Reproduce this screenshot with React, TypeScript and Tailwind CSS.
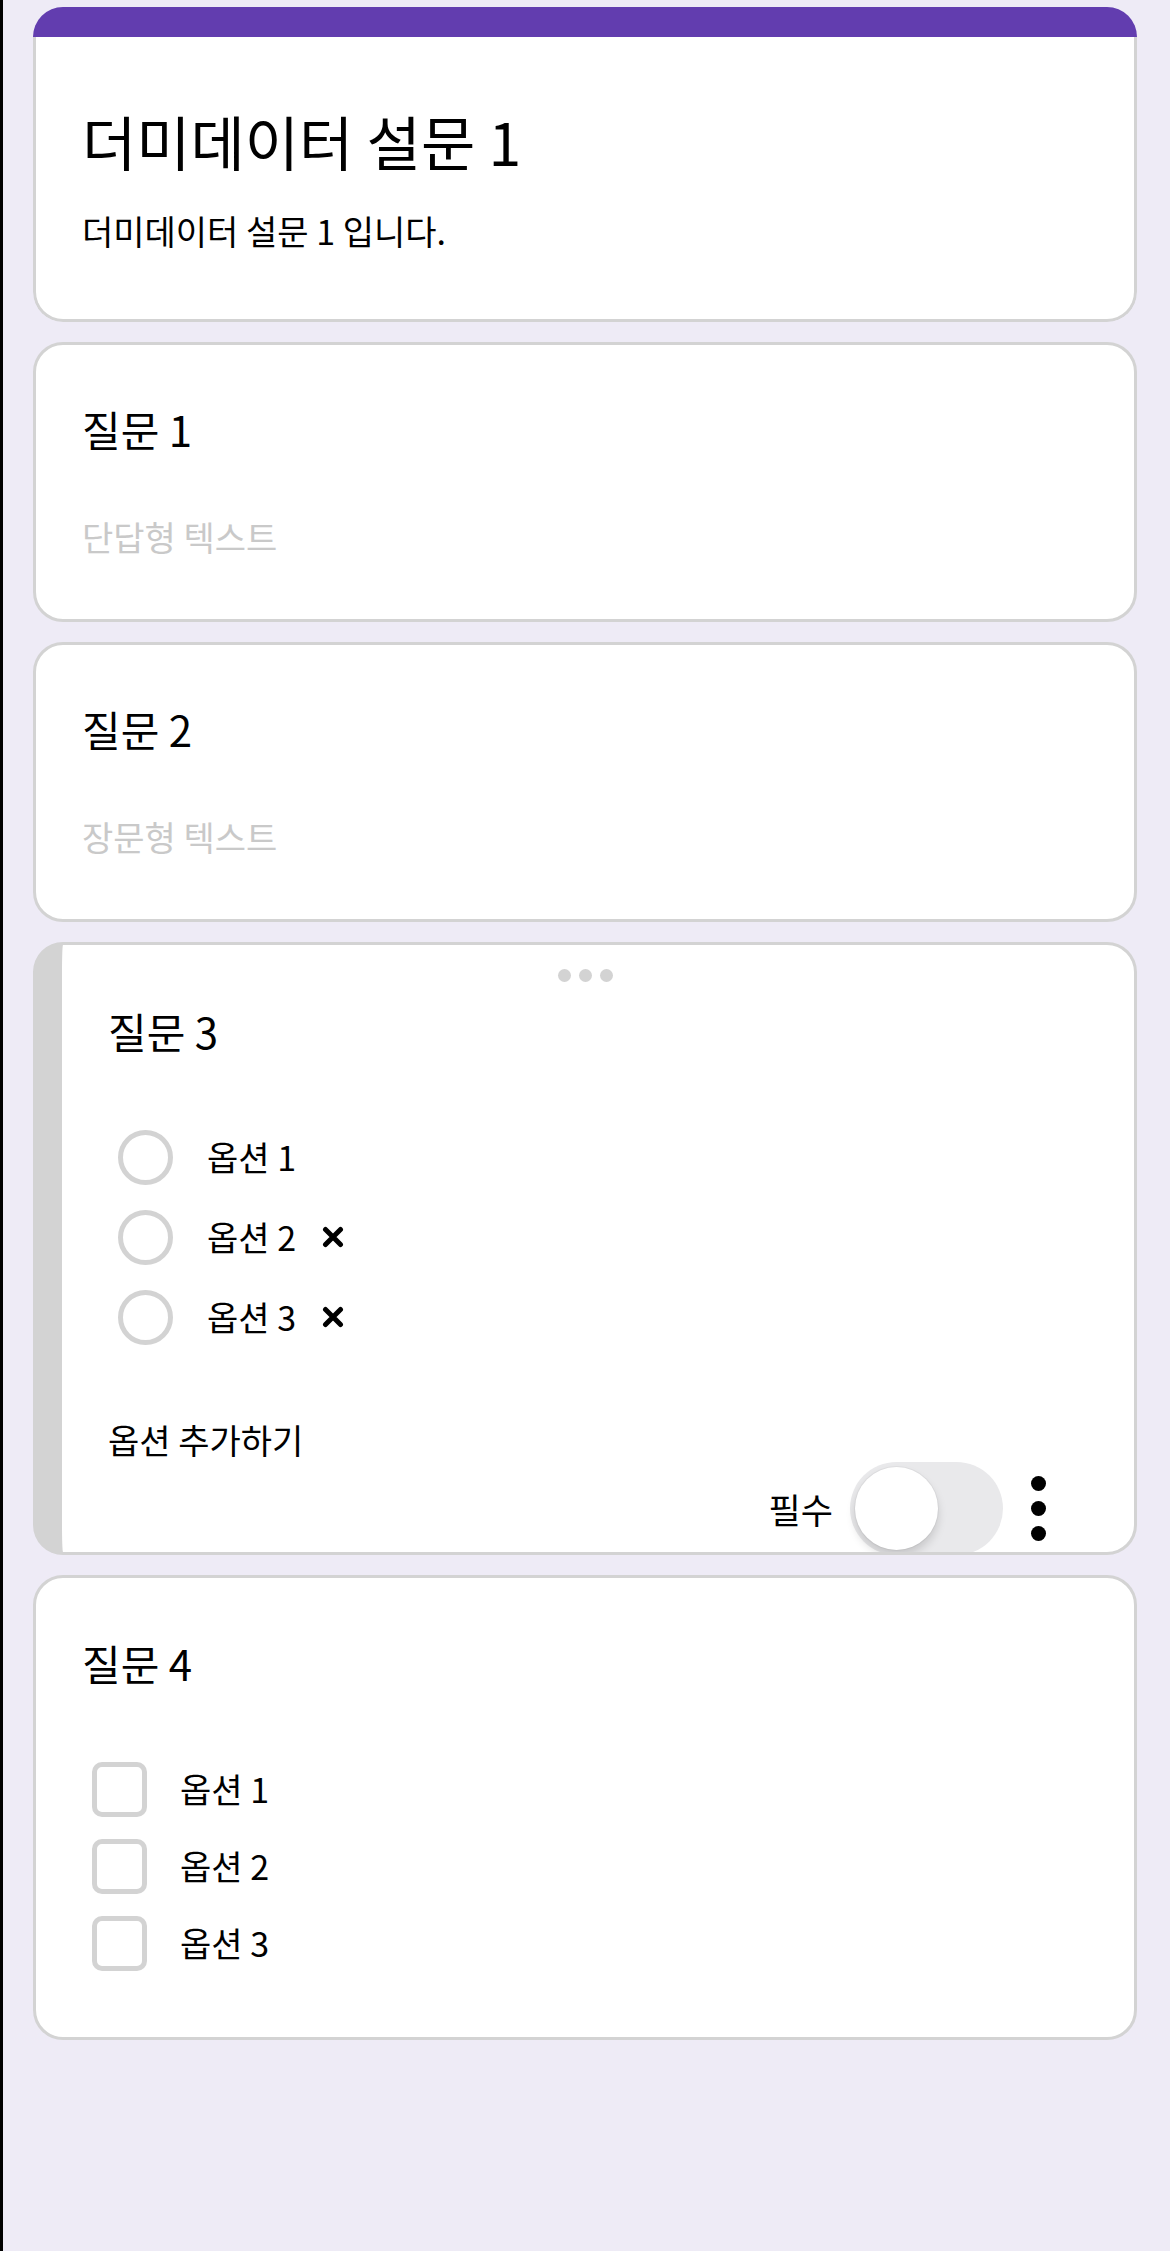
import { ReactNode } from "react"

const grayBorder = "border-[#d3d3d3]"

function Card({ children, className = "" }: { children: ReactNode; className?: string }) {
  return (
    <div className={`rounded-[30px] border-[3px] ${grayBorder} bg-white ${className}`}>{children}</div>
  )
}

function CloseIcon() {
  return (
    <svg width="22" height="22" viewBox="0 0 22 22" className="ml-[26px]">
      <path d="M3.5 3.5 L18.5 18.5 M18.5 3.5 L3.5 18.5" stroke="black" strokeWidth="5" strokeLinecap="round" />
    </svg>
  )
}

function RadioRow({ label, removable }: { label: string; removable?: boolean }) {
  return (
    <li className="flex h-[56px] items-center">
      <span className="h-[55px] w-[55px] rounded-full border-[5px] border-[#d3d3d3]" />
      <span className="ml-[34px] text-[34px] leading-[40px]">{label}</span>
      {removable && <CloseIcon />}
    </li>
  )
}

function CheckRow({ label }: { label: string }) {
  return (
    <li className="flex h-[56px] items-center">
      <span className="h-[55px] w-[55px] rounded-[10px] border-[5px] border-[#d3d3d3]" />
      <span className="ml-[33px] text-[34px] leading-[40px]">{label}</span>
    </li>
  )
}

function Toggle() {
  return (
    <div className="relative h-[93px] w-[153px] rounded-full bg-[#e9e9eb]">
      <span className="absolute left-[5px] top-[5px] h-[83px] w-[83px] rounded-full bg-white shadow-[0_6px_10px_rgba(0,0,0,0.15),0_0_0_1px_rgba(0,0,0,0.04)]" />
    </div>
  )
}

export default function App() {
  return (
    <div className="min-h-screen border-l-[3px] border-black bg-[#eeebf6] font-['Noto_Sans_CJK_KR','Noto_Sans',sans-serif] text-black">
      <div className="flex flex-col gap-[20px] pl-[30px] pr-[33px] pt-[7px]">
        {/* form header */}
        <div className="overflow-hidden rounded-[30px]">
          <div className="h-[30px] bg-[#623daf]" />
          <div className={`rounded-b-[30px] border-[3px] border-t-0 ${grayBorder} bg-white pb-[68px] pl-[46px] pt-[72px]`}>
            <h1 className="text-[59px] leading-[64px]">더미데이터 설문 1</h1>
            <p className="mt-[38px] text-[34px] leading-[40px]">더미데이터 설문 1 입니다.</p>
          </div>
        </div>

        <Card className="pb-[62px] pl-[46px] pt-[60px]">
          <h2 className="text-[42px] leading-[48px]">질문 1</h2>
          <p className="mt-[64px] text-[34px] leading-[40px] text-[#c9c9c9]">단답형 텍스트</p>
        </Card>

        <Card className="pb-[62px] pl-[46px] pt-[60px]">
          <h2 className="text-[42px] leading-[48px]">질문 2</h2>
          <p className="mt-[64px] text-[34px] leading-[40px] text-[#c9c9c9]">장문형 텍스트</p>
        </Card>

        {/* selected question */}
        <div className={`overflow-hidden rounded-[30px] border-[3px] border-l-[29px] ${grayBorder} bg-white`}>
          <div className="flex justify-center gap-[8px] pr-[26px] pt-[24px]">
            <span className="h-[13px] w-[13px] rounded-full bg-[#d3d3d3]" />
            <span className="h-[13px] w-[13px] rounded-full bg-[#d3d3d3]" />
            <span className="h-[13px] w-[13px] rounded-full bg-[#d3d3d3]" />
          </div>
          <div className="pl-[46px] pr-[88px]">
            <h2 className="mt-[25px] text-[42px] leading-[48px]">질문 3</h2>
            <ul className="mt-[74px] flex flex-col gap-[24px] pl-[10px]">
              <RadioRow label="옵션 1" />
              <RadioRow label="옵션 2" removable />
              <RadioRow label="옵션 3" removable />
            </ul>
            <p className="mt-[75px] text-[34px] leading-[40px]">옵션 추가하기</p>
            <div className="-mb-[3px] mt-[2px] flex h-[93px] items-center justify-end">
              <span className="text-[35px] leading-[40px]">필수</span>
              <div className="ml-[17px]">
                <Toggle />
              </div>
              <div className="ml-[28px] flex flex-col gap-[10px]">
                <span className="h-[15px] w-[15px] rounded-full bg-black" />
                <span className="h-[15px] w-[15px] rounded-full bg-black" />
                <span className="h-[15px] w-[15px] rounded-full bg-black" />
              </div>
            </div>
          </div>
        </div>

        <Card className="pb-[66px] pl-[46px] pt-[61px]">
          <h2 className="text-[42px] leading-[48px]">질문 4</h2>
          <ul className="mt-[74px] flex flex-col gap-[21px] pl-[10px]">
            <CheckRow label="옵션 1" />
            <CheckRow label="옵션 2" />
            <CheckRow label="옵션 3" />
          </ul>
        </Card>
      </div>
    </div>
  )
}
